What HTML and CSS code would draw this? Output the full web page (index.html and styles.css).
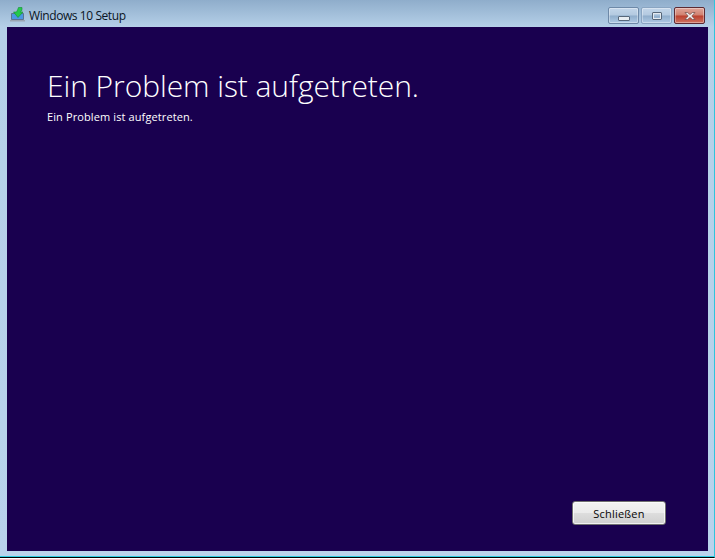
FILE: index.html
```html
<!DOCTYPE html>
<html lang="de">
<head>
<meta charset="utf-8">
<title>Windows 10 Setup</title>
<link rel="stylesheet" href="styles.css">
</head>
<body>
<div class="window">
  <header class="titlebar">
    <div class="title-left">
      <svg class="app-icon" width="16" height="16" viewBox="0 0 16 16">
        <path d="M1.500 6.500h12v6h-12z" fill="#4b97e4" stroke="#5c7391" stroke-width="1"/>
        <path d="M0 13h15v1.500H0z" fill="#9aa5b2"/>
        <path d="M8.500 0.500h3.500v1.500c0 1.500-.8 2.500-1.500 3H13L8 10.500 3.500 5h3c.8-1.500 1.500-3 2-4.500z" fill="#25c94c" stroke="#138f33" stroke-width=".6"/>
      </svg>
      <span class="title-text">Windows 10 Setup</span>
    </div>
    <div class="controls">
      <div class="ctl ctl-min"><span class="glyph-min"></span></div>
      <div class="ctl ctl-max"><span class="glyph-max"></span></div>
      <div class="ctl ctl-close">
        <svg width="14" height="10" viewBox="0 0 14 10"><path d="M2 1.500h2.500L7 3.500l2.500-2H12L8.800 5 12 8.500H9.500L7 6.500l-2.500 2H2L5.200 5z" fill="#f1eded" stroke="#6e4a48" stroke-width=".7"/></svg>
      </div>
    </div>
  </header>
  <main class="content">
    <div class="message">
      <h1 class="heading">Ein Problem ist aufgetreten.</h1>
      <p class="detail">Ein Problem ist aufgetreten.</p>
    </div>
    <div class="actions">
      <button class="close-btn" type="button">Schließen</button>
    </div>
  </main>
</div>
</body>
</html>
```
FILE: styles.css
```css
html, body {
  margin: 0;
  padding: 0;
  background: #fff;
}
.window {
  box-sizing: border-box;
  width: 715px;
  height: 558px;
  display: flex;
  flex-direction: column;
  padding: 0 6px 6px 7px;
  background: linear-gradient(180deg, #8fadcb 0, #b5d0e8 27px, #b9d3ec 100%);
  border-right: 1px solid #2fc4dc;
  border-bottom: 1px solid #000;
  box-shadow: inset 0 -1px 0 #2ccbe0;
  font-family: "Open Sans", "Noto Sans", sans-serif;
}
.titlebar {
  height: 27px;
  flex: none;
  display: flex;
  justify-content: space-between;
  align-items: flex-start;
}
.title-left {
  display: flex;
  align-items: center;
  gap: 3px;
  padding: 8px 0 0 3px;
}
.app-icon {
  margin-top: -2px;
}
.title-text {
  font-size: 12px;
  line-height: 16px;
  color: #0a1424;
  letter-spacing: -0.42px;
}
.controls {
  display: flex;
  gap: 2px;
  padding: 7px 3px 0 0;
}
.ctl {
  box-sizing: border-box;
  width: 31px;
  height: 17px;
  border: 1px solid #6e89a8;
  border-radius: 2px;
  display: flex;
  align-items: center;
  justify-content: center;
  background: linear-gradient(180deg, #c3d6ea 0, #b3c9e0 48%, #8fadcb 52%, #afcae4 100%);
  box-shadow: inset 0 0 0 1px rgba(255,255,255,.35);
}
.ctl-max {
  border-color: #8aa5c2;
}
.ctl-close {
  border-color: #5d2b33;
  background: linear-gradient(180deg, #e0a59a 0, #d0806f 48%, #bb3f2d 52%, #cf7462 100%);
}
.glyph-min {
  width: 10px;
  height: 3px;
  margin-top: 5px;
  background: #e8edf2;
  border: 1px solid #57677a;
  border-radius: 1px;
}
.glyph-max {
  box-sizing: border-box;
  width: 10px;
  height: 8px;
  border: 2px solid #e4e9ef;
  outline: 1px solid #57677a;
  outline-offset: -1px;
  border-radius: 1px;
}
.content {
  flex: 1;
  display: flex;
  flex-direction: column;
  justify-content: space-between;
  background: #19004f;
  padding: 41px 42px 26px 40px;
}
.heading {
  margin: 0;
  font-size: 30px;
  line-height: 36px;
  font-weight: 300;
  letter-spacing: -0.07px;
  color: #fff;
}
.detail {
  margin: 5px 0 0;
  font-size: 11px;
  line-height: 15px;
  letter-spacing: 0.11px;
  color: #fff;
}
.actions {
  display: flex;
  justify-content: flex-end;
}
.close-btn {
  box-sizing: border-box;
  width: 94px;
  height: 24px;
  padding: 0;
  border: 1px solid #707070;
  border-radius: 3px;
  background: linear-gradient(180deg, #f2f2f2 0, #ebebeb 48%, #dddddd 52%, #cfcfcf 100%);
  box-shadow: inset 0 0 0 1px rgba(255,255,255,.7);
  font-family: "Open Sans", "Noto Sans", sans-serif;
  font-size: 11px;
  letter-spacing: 0.2px;
  color: #050505;
}
```
